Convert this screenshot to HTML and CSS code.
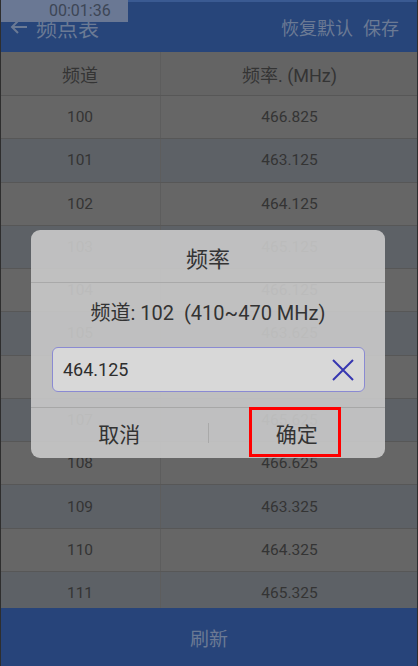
FILE: index.html
```html
<!DOCTYPE html>
<html lang="zh">
<head>
<meta charset="utf-8">
<title>频点表</title>
<link rel="stylesheet" href="styles.css">
</head>
<body>
<div class="screen">
  <header class="appbar">
    <div class="appbar-left">
      <svg class="back" width="18" height="14" viewBox="0 0 18 14"><path d="M17 7H2M8 1L2 7l6 6" fill="none" stroke="currentColor" stroke-width="2"/></svg>
      <span class="title">频点表</span>
    </div>
    <div class="actions">
      <span>恢复默认</span>
      <span>保存</span>
    </div>
  </header>
  <div class="table">
    <div class="row head"><div class="c1">频道</div><div class="c2">频率. (MHz)</div></div>
    <div class="row"><div class="c1">100</div><div class="c2">466.825</div></div>
    <div class="row alt"><div class="c1">101</div><div class="c2">463.125</div></div>
    <div class="row"><div class="c1">102</div><div class="c2">464.125</div></div>
    <div class="row alt"><div class="c1">103</div><div class="c2">465.125</div></div>
    <div class="row"><div class="c1">104</div><div class="c2">466.125</div></div>
    <div class="row alt"><div class="c1">105</div><div class="c2">463.625</div></div>
    <div class="row"><div class="c1">106</div><div class="c2">464.625</div></div>
    <div class="row alt"><div class="c1">107</div><div class="c2">465.625</div></div>
    <div class="row"><div class="c1">108</div><div class="c2">466.625</div></div>
    <div class="row alt"><div class="c1">109</div><div class="c2">463.325</div></div>
    <div class="row"><div class="c1">110</div><div class="c2">464.325</div></div>
    <div class="row alt"><div class="c1">111</div><div class="c2">465.325</div></div>
  </div>
  <footer class="footer">刷新</footer>

  <div class="timer">00:01:36</div>

  <div class="dialog">
    <div class="dlg-title">频率</div>
    <div class="dlg-msg">频道: 102  (410~470 MHz)</div>
    <div class="dlg-input">
      <span class="value">464.125</span>
      <svg class="clear" width="22" height="22" viewBox="0 0 22 22"><path d="M1 1L21 21M21 1L1 21" fill="none" stroke="currentColor" stroke-width="2"/></svg>
    </div>
    <div class="dlg-buttons">
      <div class="btn">取消</div>
      <div class="sep"></div>
      <div class="btn">确定</div>
    </div>
  </div>
  <div class="highlight"></div>
</div>
</body>
</html>
```

FILE: styles.css
```css
html, body {
  margin: 0;
  padding: 0;
  background: #333;
}
body {
  font-family: Roboto, "Noto Sans CJK SC", sans-serif;
}
.screen {
  position: relative;
  width: 418px;
  height: 666px;
  display: flex;
  flex-direction: column;
  overflow: hidden;
  background: #666;
}
.screen::after {
  content: "";
  position: absolute;
  inset: 0;
  border-left: 1px solid #2e2e2e;
  border-right: 1px solid #2e2e2e;
  pointer-events: none;
}
.appbar {
  height: 52px;
  box-sizing: border-box;
  border-top: 2px solid #3a5a92;
  background: #27457a;
  color: #6b7a94;
  display: flex;
  align-items: center;
  justify-content: space-between;
  padding: 0 19px 0 10px;
  flex: none;
}
.appbar-left {
  display: flex;
  align-items: center;
  gap: 8px;
}
.back { display: block; }
.title {
  font-family: "Noto Sans CJK SC", sans-serif;
  font-size: 21px;
}
.actions {
  display: flex;
  gap: 10px;
  font-family: "Noto Sans CJK SC", sans-serif;
  font-size: 18px;
}
.table {
  flex: 1;
  overflow: hidden;
}
.row {
  display: flex;
  height: 43.27px;
  box-sizing: border-box;
  border-bottom: 1px solid #575757;
  background: #666;
  color: #343434;
  font-size: 15.5px;
}
.row.alt { background: #5d6166; }
.row.head {
  height: 44px;
  background: #646464;
  font-size: 18px;
}
.c1, .c2 {
  display: flex;
  align-items: center;
  justify-content: center;
}
.c1 {
  width: 161px;
  box-sizing: border-box;
  border-right: 1px solid #5d5d5d;
}
.c2 { flex: 1; }
.footer {
  height: 58px;
  flex: none;
  background: #27447a;
  color: #6b7a94;
  display: flex;
  align-items: center;
  justify-content: center;
  font-family: "Noto Sans CJK SC", sans-serif;
  font-size: 19px;
}
.timer {
  position: absolute;
  left: 0;
  top: 0;
  width: 128px;
  height: 22px;
  box-sizing: border-box;
  padding-left: 49px;
  background: #6a7894;
  color: #3d4656;
  font-size: 16px;
  line-height: 22px;
}
.dialog {
  position: absolute;
  left: 31px;
  top: 230px;
  width: 354px;
  height: 228px;
  border-radius: 9px;
  background: rgba(202, 202, 202, 0.9);
  color: #333;
  display: flex;
  flex-direction: column;
  overflow: hidden;
}
.dlg-title {
  height: 53px;
  box-sizing: border-box;
  border-bottom: 1px solid #a9a9a9;
  display: flex;
  align-items: center;
  justify-content: center;
  font-family: "Noto Sans CJK SC", sans-serif;
  font-size: 22px;
  padding-top: 2px;
}
.dlg-msg {
  height: 54px;
  display: flex;
  align-items: center;
  justify-content: center;
  white-space: pre;
  font-size: 20px;
  padding-top: 2px;
  box-sizing: border-box;
}
.dlg-input {
  margin: 10px 20px 15px 21px;
  height: 45px;
  box-sizing: border-box;
  border: 1px solid #8a8ad2;
  border-radius: 6px;
  background: #d8d8d8;
  display: flex;
  align-items: center;
  justify-content: space-between;
  padding: 0 10px 0 10px;
  font-size: 18px;
  color: #2e2e2e;
}
.clear {
  display: block;
  color: #3636b0;
}
.dlg-buttons {
  height: 51px;
  box-sizing: border-box;
  border-top: 1px solid #a7a7a7;
  display: flex;
  align-items: center;
}
.btn {
  flex: 1;
  text-align: center;
  font-family: "Noto Sans CJK SC", sans-serif;
  font-size: 21px;
  color: #333;
}
.sep {
  width: 1px;
  height: 20px;
  background: #a9a9a9;
}
.highlight {
  position: absolute;
  left: 249px;
  top: 407px;
  width: 92px;
  height: 50px;
  box-sizing: border-box;
  border: 3px solid #ff0000;
}
```
